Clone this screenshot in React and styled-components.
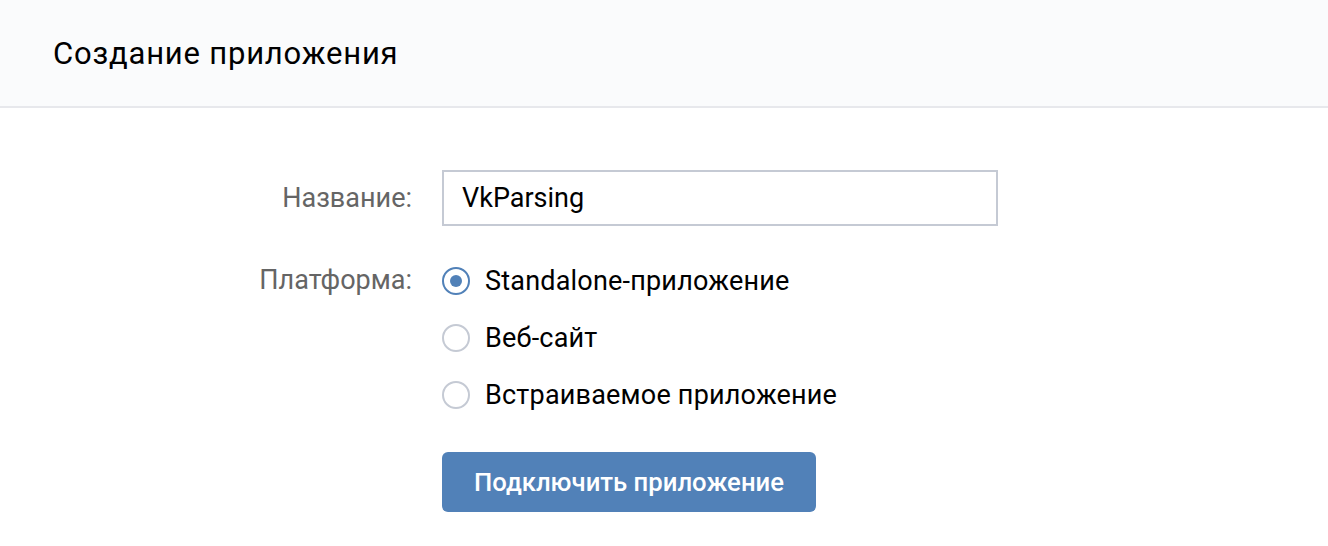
import React, { useState } from 'react'
import styled, { createGlobalStyle } from 'styled-components'

const GlobalStyle = createGlobalStyle`
  body {
    margin: 0;
    background: #ffffff;
    font-family: Roboto, "Noto Sans", sans-serif;
    -webkit-font-smoothing: antialiased;
  }
`

const Page = styled.div`
  width: 1328px;
  min-height: 546px;
  background: #ffffff;
`

const Header = styled.div`
  height: 106px;
  background: #fafbfc;
  border-bottom: 2px solid #e7e8ec;
  display: flex;
  align-items: center;
  padding-left: 53px;
  font-size: 31px;
  letter-spacing: 0.8px;
  color: #000000;
`

const Form = styled.div`
  display: grid;
  grid-template-columns: 412px 1fr;
  column-gap: 30px;
  row-gap: 26px;
  padding-top: 62px;
`

const Label = styled.div`
  text-align: right;
  font-size: 27px;
  color: #656565;
  height: ${p => p.h || 56}px;
  line-height: ${p => p.h || 56}px;
`

const Input = styled.input`
  box-sizing: border-box;
  width: 556px;
  height: 56px;
  border: 2px solid #c5cad4;
  padding: 0 18px;
  font-family: inherit;
  font-size: 27px;
  color: #000000;
  outline: none;
`

const Radios = styled.div`
  display: flex;
  flex-direction: column;
`

const Option = styled.label`
  display: flex;
  align-items: center;
  gap: 15px;
  height: 57px;
  font-size: 27px;
  letter-spacing: 0.2px;
  color: #000000;
  cursor: pointer;
`

const Circle = styled.span`
  box-sizing: border-box;
  flex: none;
  width: 28px;
  height: 28px;
  border-radius: 50%;
  border: 2px solid ${p => (p.checked ? '#5181b8' : '#c5cad4')};
  display: flex;
  align-items: center;
  justify-content: center;

  &::after {
    content: '';
    width: 12px;
    height: 12px;
    border-radius: 50%;
    background: #5181b8;
    display: ${p => (p.checked ? 'block' : 'none')};
  }
`

const Button = styled.button`
  width: 374px;
  height: 60px;
  margin-top: 3px;
  border: none;
  border-radius: 6px;
  background: #5181b8;
  color: #ffffff;
  font-family: inherit;
  font-size: 25.7px;
  font-weight: 500;
  cursor: pointer;
`

const platforms = ['Standalone-приложение', 'Веб-сайт', 'Встраиваемое приложение']

export default function App() {
  const [platform, setPlatform] = useState(0)

  return (
    <Page>
      <GlobalStyle />
      <Header>Создание приложения</Header>
      <Form>
        <Label>Название:</Label>
        <div>
          <Input defaultValue="VkParsing" />
        </div>
        <Label h={57}>Платформа:</Label>
        <Radios>
          {platforms.map((name, i) => (
            <Option key={name} onClick={() => setPlatform(i)}>
              <Circle checked={platform === i} />
              {name}
            </Option>
          ))}
        </Radios>
        <div />
        <div>
          <Button>Подключить приложение</Button>
        </div>
      </Form>
    </Page>
  )
}
